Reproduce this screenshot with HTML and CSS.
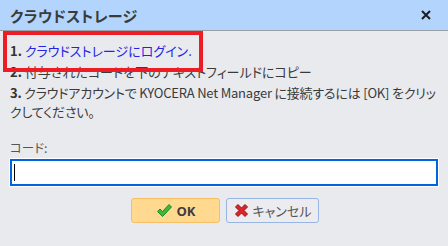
FILE: index.html
```html
<!DOCTYPE html>
<html lang="ja">
<head>
<meta charset="utf-8">
<link rel="stylesheet" href="styles.css">
</head>
<body>
<div class="dialog">
  <div class="titlebar">
    <span class="title">クラウドストレージ</span>
    <svg class="close" width="12" height="12" viewBox="0 0 12 12"><path d="M2 2 L10 10 M10 2 L2 10" stroke="#1e1e1e" stroke-width="2" fill="none"/></svg>
  </div>
  <div class="content">
    <div class="steps">
      <p class="step"><b>1.</b> <span class="link">クラウドストレージにログイン.</span></p>
      <p class="step"><b>2.</b> 付与されたコードを下のテキストフィールドにコピー</p>
      <p class="step step-wrap"><b>3.</b> クラウドアカウントで KYOCERA Net Manager に接続するには [OK] をクリックしてください。</p>
    </div>
    <div class="field">
      <label class="label">コード:</label>
      <div class="input"><span class="caret"></span></div>
    </div>
    <div class="buttons">
      <div class="btn ok">
        <svg width="17" height="15" viewBox="0 0 17 15"><path d="M1.5 8.5 L4 6 L6.5 8.5 L13 1.5 L15.5 4 L6.5 13.5 Z" fill="#3cb83c" stroke="#1f8a1f" stroke-width="1" stroke-linejoin="round"/></svg>
        <span class="btn-text bold">OK</span>
      </div>
      <div class="btn cancel">
        <svg width="15" height="15" viewBox="0 0 15 15"><path d="M1.5 4 L4 1.5 L7.5 5 L11 1.5 L13.5 4 L10 7.5 L13.5 11 L11 13.5 L7.5 10 L4 13.5 L1.5 11 L5 7.5 Z" fill="#d9262b" stroke="#8f1418" stroke-width="1" stroke-linejoin="round"/></svg>
        <span class="btn-text">キャンセル</span>
      </div>
    </div>
  </div>
  <div class="highlight"></div>
</div>
</body>
</html>
```
FILE: styles.css
```css
* { box-sizing: border-box; }
html, body { margin: 0; padding: 0; }
body {
  width: 448px;
  height: 246px;
  overflow: hidden;
  background: #e9eaee;
  font-family: "Noto Sans CJK JP", "Noto Sans", sans-serif;
  font-feature-settings: "palt";
  color: #3a3a3a;
}
.dialog {
  position: relative;
  width: 448px;
  height: 246px;
  background: #e9eaee;
}
.titlebar {
  height: 31px;
  background: #b2d4fd;
  border-bottom: 1px solid #9a9ea6;
  display: flex;
  align-items: center;
  justify-content: space-between;
  padding: 0 16px 0 10px;
}
.title {
  font-size: 15px;
  font-weight: 700;
  color: #3b3b3b;
  letter-spacing: 0.4px;
}
.close { display: block; }
.content {
  padding: 10px 10px 0 10px;
}
.steps { font-size: 13px; }
.step {
  margin: 0;
  line-height: 20px;
}
.step + .step { margin-top: 1px; }
.step-wrap { letter-spacing: -0.2px; line-height: 19px; line-break: anywhere; }
.step b { font-weight: 700; color: #333; }
.link { color: #2323e8; }
.field { margin-top: 19px; }
.label {
  display: block;
  font-size: 12.5px;
  color: #555;
  line-height: 16px;
}
.input {
  margin-top: 3px;
  height: 27px;
  background: #fff;
  border: 2px solid #0064e0;
  box-shadow: 0 0 0 1px #fff;
  display: flex;
  align-items: center;
  padding-left: 2px;
}
.caret {
  width: 1px;
  height: 17px;
  background: #000;
}
.buttons {
  margin-top: 12px;
  display: flex;
  justify-content: center;
  gap: 6px;
  padding-left: 2px;
}
.btn {
  height: 25px;
  display: flex;
  align-items: center;
  justify-content: center;
  gap: 4px;
  border-radius: 3px;
  font-size: 13px;
}
.btn.ok {
  width: 89px;
  background: #ffd98f;
  border: 1px solid #f6c062;
  color: #3c3c3c;
}
.btn.cancel {
  width: 93px;
  background: #ececf0;
  border: 1px solid #97b6e4;
  color: #555;
}
.btn-text.bold { font-weight: 700; font-family: "Open Sans", sans-serif; }
.highlight {
  position: absolute;
  left: 3px;
  top: 31px;
  width: 200px;
  height: 41px;
  border: 4px solid #ee1c25;
}
```
